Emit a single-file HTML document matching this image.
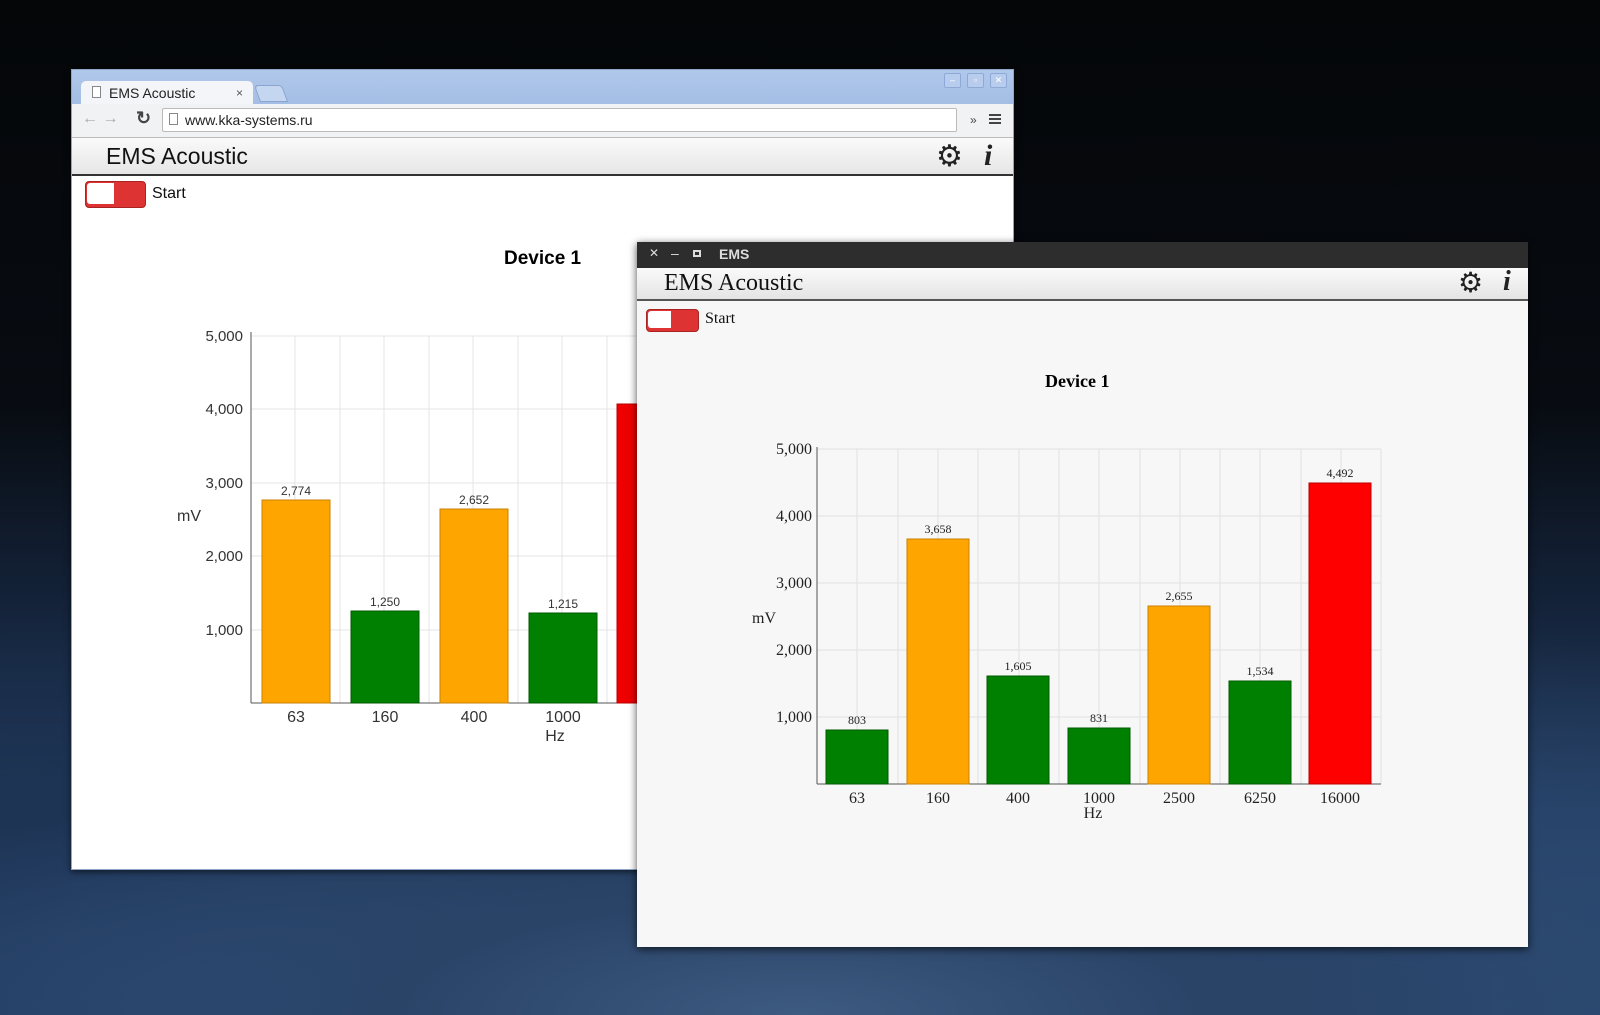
<!DOCTYPE html>
<html><head><meta charset="utf-8"><style>
*{margin:0;padding:0;box-sizing:border-box}
body{width:1600px;height:1015px;overflow:hidden;position:relative;font-family:"Liberation Sans",sans-serif;
background:
radial-gradient(ellipse 900px 260px at 800px 1015px,#3d5a80 0%,#2a4468 45%,rgba(20,35,60,0) 100%),
radial-gradient(ellipse 1200px 400px at 300px 1000px,#2e4d78 0%,rgba(25,45,75,0.6) 50%,rgba(0,0,0,0) 100%),
radial-gradient(ellipse 900px 350px at 1400px 980px,#2c4a72 0%,rgba(0,0,0,0) 100%),
linear-gradient(#040608 0%,#080c12 40%,#14233a 60%,#243e62 80%,#2a4670 100%);}
.abs{position:absolute}
.win1{left:71px;top:69px;width:943px;height:801px;background:#fff;border:1px solid #8fa6c8;box-shadow:0 2px 6px rgba(0,0,0,.6)}
.tb1{left:0;top:0;width:100%;height:34px;background:linear-gradient(#b0c8ea,#a3bde4)}
.tab{left:9px;top:11px;width:172px;height:24px;background:#f3f5f8;border-radius:5px 5px 0 0;font-size:14px;padding:4px 0 0 28px;color:#222}
.tool{left:0;top:34px;width:100%;height:34px;background:#f1f2f4;border-bottom:1px solid #bbb}
.url{left:90px;top:38px;width:795px;height:24px;background:#fff;border:1px solid #bbb;border-radius:2px;font-size:14px;padding:3px 0 0 22px;color:#222}
.hdr1{left:0;top:68px;width:100%;height:38px;background:linear-gradient(#fafafa,#e6e6e6);border-bottom:2px solid #333}
.tog{border-radius:4px;background:#d33;border:1px solid #a22}
.tog i{position:absolute;left:1px;top:1px;bottom:3px;width:45%;background:#fff;border-radius:3px 0 0 3px}
.win2{left:637px;top:242px;width:891px;height:705px;background:#f7f7f7;box-shadow:0 2px 8px rgba(0,0,0,.7)}
.tb2{left:0;top:0;width:100%;height:26px;background:#2d2d2d;color:#ddd;font-size:14px}
.hdr2{left:0;top:26px;width:100%;height:33px;background:linear-gradient(#fafafa,#e4e4e4);border-bottom:2px solid #555}
.serif{font-family:"Liberation Serif",serif}
.wc{position:absolute;top:3px;width:17px;height:15px;background:#b8cdee;border:1px solid #8ea9d6;border-radius:2px;font-size:9px;color:#fff;text-align:center;line-height:13px}
</style></head><body>

<div class="abs win1">
 <div class="abs tb1"></div>
 <div class="abs tab">EMS Acoustic<span style="position:absolute;right:10px;top:5px;font-size:12px;color:#555">×</span></div>
 <div class="abs" style="left:20px;top:16px;width:9px;height:12px;border:1px solid #888;background:#fff"></div>
 <div class="abs" style="left:185px;top:15px;width:28px;height:17px;background:#c5d7f0;border:1px solid #8aa6d0;border-radius:4px 4px 0 0;transform:skewX(20deg)"></div>
 <div class="wc" style="left:872px">–</div><div class="wc" style="left:895px">▫</div><div class="wc" style="left:918px">✕</div>
 <div class="abs tool"></div>
 <div class="abs" style="left:10px;top:40px;font-size:16px;color:#aaa">← →</div>
 <div class="abs" style="left:64px;top:38px;font-size:18px;color:#444;font-weight:bold">↻</div>
 <div class="abs url">www.kka-systems.ru</div>
 <div class="abs" style="left:97px;top:43px;width:9px;height:12px;border:1px solid #888"></div>
 <div class="abs" style="left:898px;top:43px;font-size:12px;color:#444">»</div>
 <div class="abs" style="left:917px;top:44px;width:12px;height:2px;background:#444;box-shadow:0 4px 0 #444,0 8px 0 #444"></div>
 <div class="abs hdr1"><div class="abs" style="left:34px;top:5px;font-size:23px;color:#111">EMS Acoustic</div>
  <div class="abs" style="left:864px;top:1px;font-size:30px;color:#222">⚙</div>
  <div class="abs serif" style="left:912px;top:1px;font-size:30px;font-style:italic;font-weight:bold;color:#222">i</div></div>
 <div class="abs tog" style="left:13px;top:111px;width:61px;height:27px"><i></i></div>
 <div class="abs" style="left:80px;top:115px;font-size:16px;color:#111">Start</div>
 <div class="abs" style="left:432px;top:178px;font-size:19px;font-weight:bold;color:#000">Device 1</div>
 <svg class="abs" style="left:0;top:0" width="943" height="801" font-family="Liberation Sans" fill="#333">
  <g stroke="#e4e4e4" stroke-width="1">
   <line x1="179" y1="266" x2="580" y2="266"/><line x1="179" y1="339" x2="580" y2="339"/><line x1="179" y1="413" x2="580" y2="413"/><line x1="179" y1="486" x2="580" y2="486"/><line x1="179" y1="560" x2="580" y2="560"/>
   <line x1="223" y1="266" x2="223" y2="633"/><line x1="268" y1="266" x2="268" y2="633"/><line x1="312" y1="266" x2="312" y2="633"/><line x1="357" y1="266" x2="357" y2="633"/><line x1="401" y1="266" x2="401" y2="633"/><line x1="446" y1="266" x2="446" y2="633"/><line x1="490" y1="266" x2="490" y2="633"/><line x1="535" y1="266" x2="535" y2="633"/>
  </g>
  <g stroke="#555"><line x1="179" y1="262" x2="179" y2="633"/><line x1="179" y1="633" x2="580" y2="633"/></g>
  <g font-size="15" text-anchor="end"><text x="171" y="271">5,000</text><text x="171" y="344">4,000</text><text x="171" y="418">3,000</text><text x="171" y="491">2,000</text><text x="171" y="565">1,000</text></g>
  <text x="105" y="451" font-size="16">mV</text>
  <g><rect x="190" y="430" width="68" height="203" fill="#ffa500" stroke="#c98200"/><rect x="279" y="541" width="68" height="92" fill="#008000" stroke="#005a00"/><rect x="368" y="439" width="68" height="194" fill="#ffa500" stroke="#c98200"/><rect x="457" y="543" width="68" height="90" fill="#008000" stroke="#005a00"/><rect x="545" y="334" width="68" height="299" fill="#e00" stroke="#b00"/></g>
  <g font-size="12" text-anchor="middle"><text x="224" y="425">2,774</text><text x="313" y="536">1,250</text><text x="402" y="434">2,652</text><text x="491" y="538">1,215</text></g>
  <g font-size="16" text-anchor="middle"><text x="224" y="652">63</text><text x="313" y="652">160</text><text x="402" y="652">400</text><text x="491" y="652">1000</text><text x="483" y="671">Hz</text></g>
 </svg>
</div>

<div class="abs win2">
 <div class="abs tb2"><span class="abs" style="left:12px;top:4px;font-size:12px">✕</span><span class="abs" style="left:34px;top:3px">–</span><span class="abs" style="left:56px;top:8px;width:8px;height:7px;border:2px solid #ddd"></span><span class="abs" style="left:82px;top:4px;font-weight:bold">EMS</span></div>
 <div class="abs hdr2"><div class="abs serif" style="left:27px;top:2px;font-size:24px;color:#111">EMS Acoustic</div>
  <div class="abs" style="left:821px;top:-2px;font-size:28px;color:#222">⚙</div>
  <div class="abs serif" style="left:866px;top:-2px;font-size:28px;font-style:italic;font-weight:bold;color:#222">i</div></div>
 <div class="abs tog" style="left:9px;top:67px;width:53px;height:23px"><i></i></div>
 <div class="abs serif" style="left:68px;top:68px;font-size:16px;color:#111">Start</div>
 <div class="abs serif" style="left:408px;top:129px;font-size:18px;font-weight:bold;color:#000">Device 1</div>
 <svg class="abs" style="left:0;top:0" width="891" height="705" font-family="Liberation Serif" fill="#222">
  <g stroke="#e2e2e2">
   <line x1="180" y1="207" x2="744" y2="207"/><line x1="180" y1="274" x2="744" y2="274"/><line x1="180" y1="341" x2="744" y2="341"/><line x1="180" y1="408" x2="744" y2="408"/><line x1="180" y1="475" x2="744" y2="475"/>
   <line x1="220" y1="207" x2="220" y2="542"/><line x1="261" y1="207" x2="261" y2="542"/><line x1="301" y1="207" x2="301" y2="542"/><line x1="341" y1="207" x2="341" y2="542"/><line x1="382" y1="207" x2="382" y2="542"/><line x1="422" y1="207" x2="422" y2="542"/><line x1="462" y1="207" x2="462" y2="542"/><line x1="503" y1="207" x2="503" y2="542"/><line x1="543" y1="207" x2="543" y2="542"/><line x1="583" y1="207" x2="583" y2="542"/><line x1="623" y1="207" x2="623" y2="542"/><line x1="664" y1="207" x2="664" y2="542"/><line x1="704" y1="207" x2="704" y2="542"/><line x1="744" y1="207" x2="744" y2="542"/>
  </g>
  <g stroke="#555"><line x1="180" y1="205" x2="180" y2="542"/><line x1="180" y1="542" x2="744" y2="542"/></g>
  <g font-size="16" text-anchor="end"><text x="175" y="212">5,000</text><text x="175" y="279">4,000</text><text x="175" y="346">3,000</text><text x="175" y="413">2,000</text><text x="175" y="480">1,000</text></g>
  <text x="115" y="381" font-size="16">mV</text>
  <g>
   <rect x="189" y="488" width="62" height="54" fill="#008000" stroke="#005a00"/>
   <rect x="270" y="297" width="62" height="245" fill="#ffa500" stroke="#c98200"/>
   <rect x="350" y="434" width="62" height="108" fill="#008000" stroke="#005a00"/>
   <rect x="431" y="486" width="62" height="56" fill="#008000" stroke="#005a00"/>
   <rect x="511" y="364" width="62" height="178" fill="#ffa500" stroke="#c98200"/>
   <rect x="592" y="439" width="62" height="103" fill="#008000" stroke="#005a00"/>
   <rect x="672" y="241" width="62" height="301" fill="#f00" stroke="#b00"/>
  </g>
  <g font-size="12" text-anchor="middle"><text x="220" y="482">803</text><text x="301" y="291">3,658</text><text x="381" y="428">1,605</text><text x="462" y="480">831</text><text x="542" y="358">2,655</text><text x="623" y="433">1,534</text><text x="703" y="235">4,492</text></g>
  <g font-size="16" text-anchor="middle"><text x="220" y="561">63</text><text x="301" y="561">160</text><text x="381" y="561">400</text><text x="462" y="561">1000</text><text x="542" y="561">2500</text><text x="623" y="561">6250</text><text x="703" y="561">16000</text><text x="456" y="576">Hz</text></g>
 </svg>
</div>
</body></html>
